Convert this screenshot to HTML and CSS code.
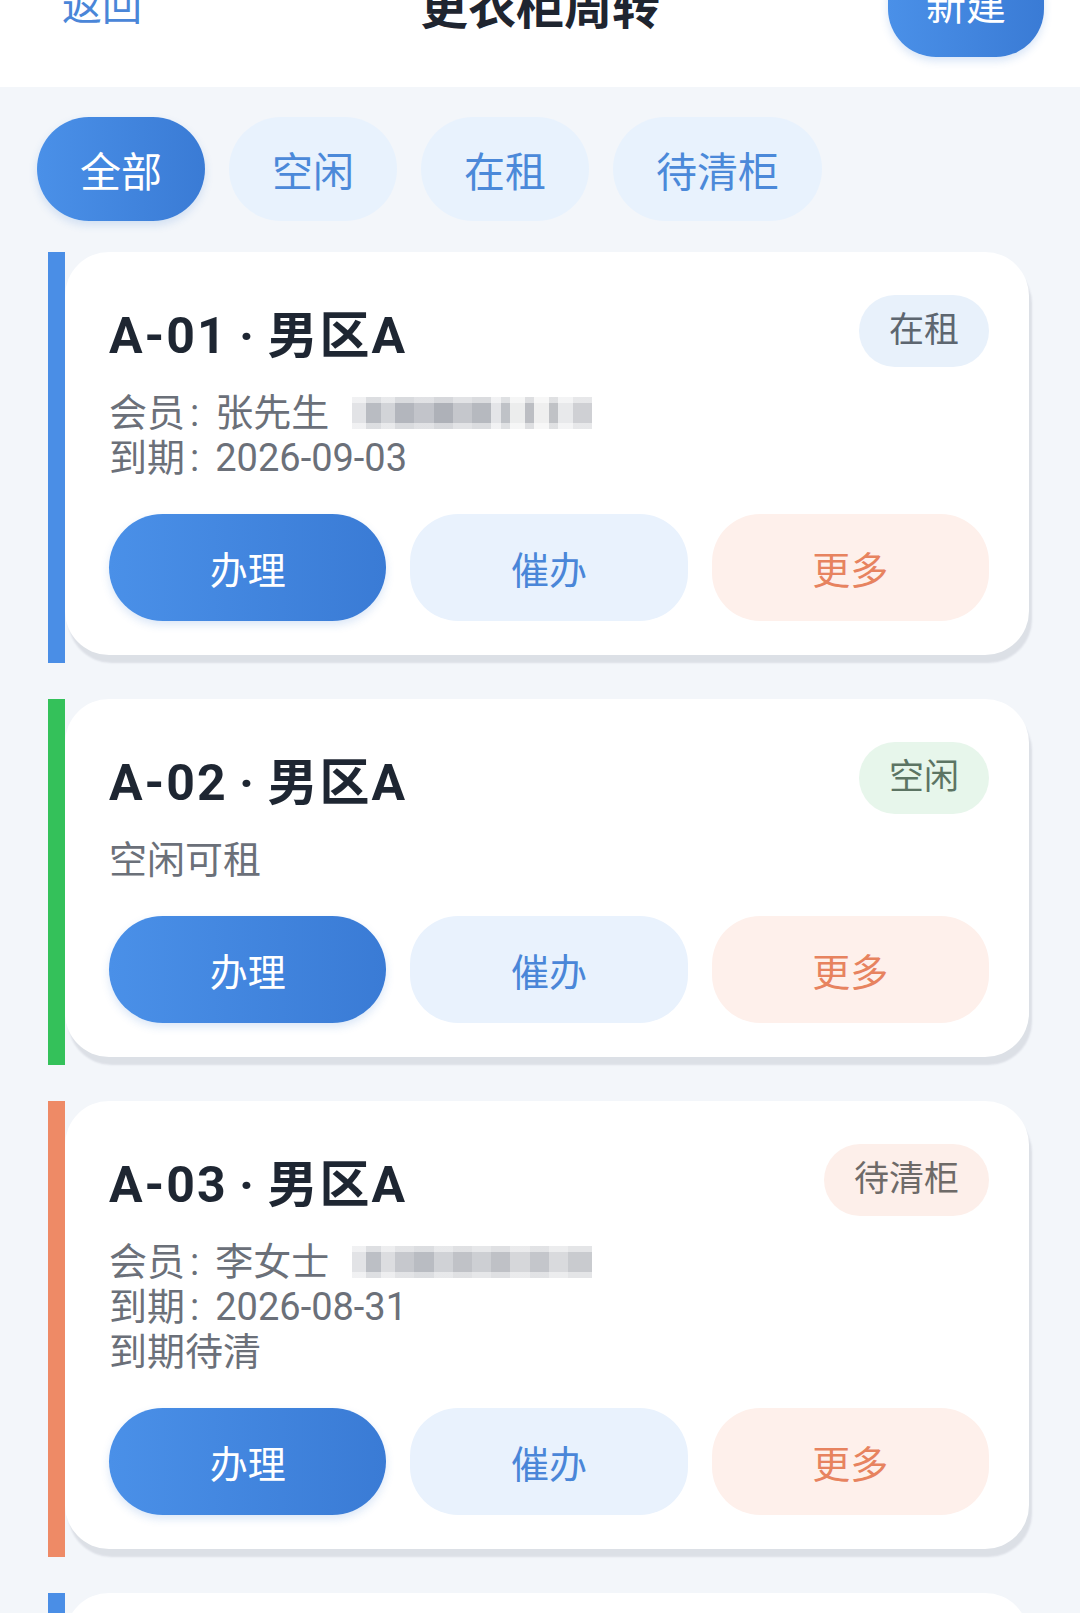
FILE: index.html
```html
<!DOCTYPE html>
<html lang="zh-CN">
<head>
    <meta charset="UTF-8">
    <meta name="viewport" content="width=device-width, initial-scale=1.0">
    <title>更衣柜周转</title>
    <link rel="stylesheet" href="styles.css">
</head>
<body>
    <header class="topbar">
        <div class="topbar-row">
            <a class="back">返回</a>
            <h1 class="title">更衣柜周转</h1>
            <div class="topbar-right">
                <button class="btn-new">新建</button>
            </div>
        </div>
    </header>

    <nav class="tabs">
        <button class="tab active">全部</button>
        <button class="tab">空闲</button>
        <button class="tab">在租</button>
        <button class="tab">待清柜</button>
    </nav>

    <main class="list">
        <div class="locker">
            <div class="stripe stripe-blue"></div>
            <div class="card">
                <div class="card-head">
                    <div class="card-title">A-01 · 男区A</div>
                    <span class="badge badge-rent">在租</span>
                </div>
                <div class="info">
                    <p>会员<span class="colon">:</span>张先生 <span class="blur"></span></p>
                    <p>到期<span class="colon">:</span>2026-09-03</p>
                </div>
                <div class="actions">
                    <button class="act act-main">办理</button>
                    <button class="act act-urge">催办</button>
                    <button class="act act-more">更多</button>
                </div>
            </div>
        </div>

        <div class="locker">
            <div class="stripe stripe-green"></div>
            <div class="card">
                <div class="card-head">
                    <div class="card-title">A-02 · 男区A</div>
                    <span class="badge badge-free">空闲</span>
                </div>
                <div class="info">
                    <p>空闲可租</p>
                </div>
                <div class="actions">
                    <button class="act act-main">办理</button>
                    <button class="act act-urge">催办</button>
                    <button class="act act-more">更多</button>
                </div>
            </div>
        </div>

        <div class="locker">
            <div class="stripe stripe-orange"></div>
            <div class="card">
                <div class="card-head">
                    <div class="card-title">A-03 · 男区A</div>
                    <span class="badge badge-clean">待清柜</span>
                </div>
                <div class="info">
                    <p>会员<span class="colon">:</span>李女士 <span class="blur blur-2"></span></p>
                    <p>到期<span class="colon">:</span>2026-08-31</p>
                    <p>到期待清</p>
                </div>
                <div class="actions">
                    <button class="act act-main">办理</button>
                    <button class="act act-urge">催办</button>
                    <button class="act act-more">更多</button>
                </div>
            </div>
        </div>

        <div class="locker">
            <div class="stripe stripe-blue"></div>
            <div class="card">
                <div class="card-head">
                    <div class="card-title">A-04 · 男区A</div>
                    <span class="badge badge-rent">在租</span>
                </div>
                <div class="info">
                    <p>会员<span class="colon">:</span>王先生</p>
                </div>
            </div>
        </div>
    </main>
</body>
</html>
```

FILE: styles.css
```css
* {
    box-sizing: border-box;
}

body {
    margin: 0;
    background-color: #f3f6fa;
    font-family: Roboto, "Noto Sans CJK SC", sans-serif;
    color: #1e2632;
}

button {
    font-family: inherit;
    border: none;
    cursor: pointer;
}

p {
    margin: 0;
}

/* top bar */
.topbar {
    background-color: #fff;
    height: 87px;
    overflow: hidden;
    padding: 0 36px;
}

.topbar-row {
    margin-top: -51px;
    height: 108px;
    display: grid;
    grid-template-columns: 1fr auto 1fr;
    align-items: center;
}

.back {
    margin-left: 26px;
    font-size: 40px;
    color: #4a86d8;
}

.title {
    margin: 0;
    font-size: 48px;
    font-weight: 700;
    color: #1f2530;
}

.topbar-right {
    display: flex;
    justify-content: flex-end;
}

.btn-new {
    height: 108px;
    padding: 0 38px;
    border-radius: 48px;
    font-size: 40px;
    color: #fff;
    background: linear-gradient(90deg, #4a90e8, #3a7bd5);
    box-shadow: 0 4px 8px rgba(58, 123, 213, 0.2);
}

/* tabs */
.tabs {
    display: flex;
    gap: 24px;
    padding: 30px 37px 0;
}

.tab {
    height: 104px;
    padding: 0 43px;
    border-radius: 52px;
    font-size: 41px;
    color: #4b89d9;
    background-color: #e8f2fd;
}

.tab.active {
    color: #fff;
    background: linear-gradient(90deg, #4a90e8, #3a7bd5);
    box-shadow: 0 4px 8px rgba(58, 123, 213, 0.18);
}

/* list */
.list {
    display: flex;
    flex-direction: column;
    gap: 36px;
    padding: 31px 51px 0 48px;
}

.locker {
    display: flex;
}

.stripe {
    width: 17px;
    flex-shrink: 0;
}

.stripe-blue {
    background-color: #4a8ee6;
}

.stripe-green {
    background-color: #34c15a;
}

.stripe-orange {
    background-color: #ee8a66;
}

.card {
    flex: 1;
    margin-bottom: 8px;
    background-color: #fff;
    border-radius: 44px;
    padding: 43px 40px 34px 44px;
    box-shadow: 3px 8px 2px rgba(40, 50, 70, 0.11);
}

.card-head {
    display: flex;
    justify-content: space-between;
    align-items: center;
    height: 72px;
}

.card-title {
    font-size: 50px;
    font-weight: 700;
    letter-spacing: 2px;
    word-spacing: -3px;
    color: #1e2632;
}

.badge {
    height: 72px;
    line-height: 72px;
    padding: 0 30px;
    border-radius: 36px;
    font-size: 35px;
}

.badge-rent {
    background-color: #e8f1fb;
    color: #5d6670;
}

.badge-free {
    background-color: #e7f6eb;
    color: #5c7463;
}

.badge-clean {
    background-color: #fdefea;
    color: #6e6a68;
}

.info {
    margin-top: 24px;
    font-size: 38px;
    line-height: 45px;
    color: #6b7079;
}

.colon {
    margin: 0 16px 0 5px;
}

.blur {
    display: inline-block;
    width: 240px;
    height: 32px;
    margin-left: 13px;
    vertical-align: -3px;
    background:
        linear-gradient(180deg, rgba(255, 255, 255, 0.5) 0 18%, rgba(255, 255, 255, 0) 18% 82%, rgba(255, 255, 255, 0.5) 82%),
        linear-gradient(90deg,
            #e2e3e6 0 6%, #b9bcc2 6% 12%, #d2d4d8 12% 18%, #b3b6bd 18% 26%,
            #c2c4ca 26% 34%, #aeb1b8 34% 42%, #c5c7cc 42% 50%, #b6b9bf 50% 58%,
            #e4e5e8 58% 62%, #bfc2c7 62% 66%, #eceded 66% 72%, #bcbec3 72% 76%,
            #efefef 76% 82%, #c0c2c6 82% 86%, #e8e9eb 86% 92%, #cfd0d4 92% 100%);
}

.blur-2 {
    background:
        linear-gradient(180deg, rgba(255, 255, 255, 0.5) 0 18%, rgba(255, 255, 255, 0) 18% 82%, rgba(255, 255, 255, 0.5) 82%),
        linear-gradient(90deg,
            #e2e3e6 0 6%, #bcbfc5 6% 12%, #dcdde0 12% 18%, #c6c8cd 18% 26%,
            #b9bcc2 26% 34%, #d0d2d6 34% 42%, #c0c2c7 42% 50%, #cdcfd3 50% 58%,
            #bfc1c6 58% 66%, #d6d7da 66% 74%, #c4c6cb 74% 82%, #d9dadd 82% 90%,
            #c9cbcf 90% 100%);
}

.actions {
    display: flex;
    gap: 24px;
    margin-top: 33px;
}

.act {
    flex: 1;
    height: 107px;
    border-radius: 48px;
    font-size: 38px;
}

.act-main {
    border-radius: 54px;
    color: #fff;
    background: linear-gradient(90deg, #4a90e8, #3a7bd5);
    box-shadow: 0 4px 8px rgba(58, 123, 213, 0.18);
}

.act-urge {
    color: #4a86d8;
    background-color: #e9f2fd;
}

.act-more {
    color: #e7835f;
    background-color: #fef0eb;
}
```
